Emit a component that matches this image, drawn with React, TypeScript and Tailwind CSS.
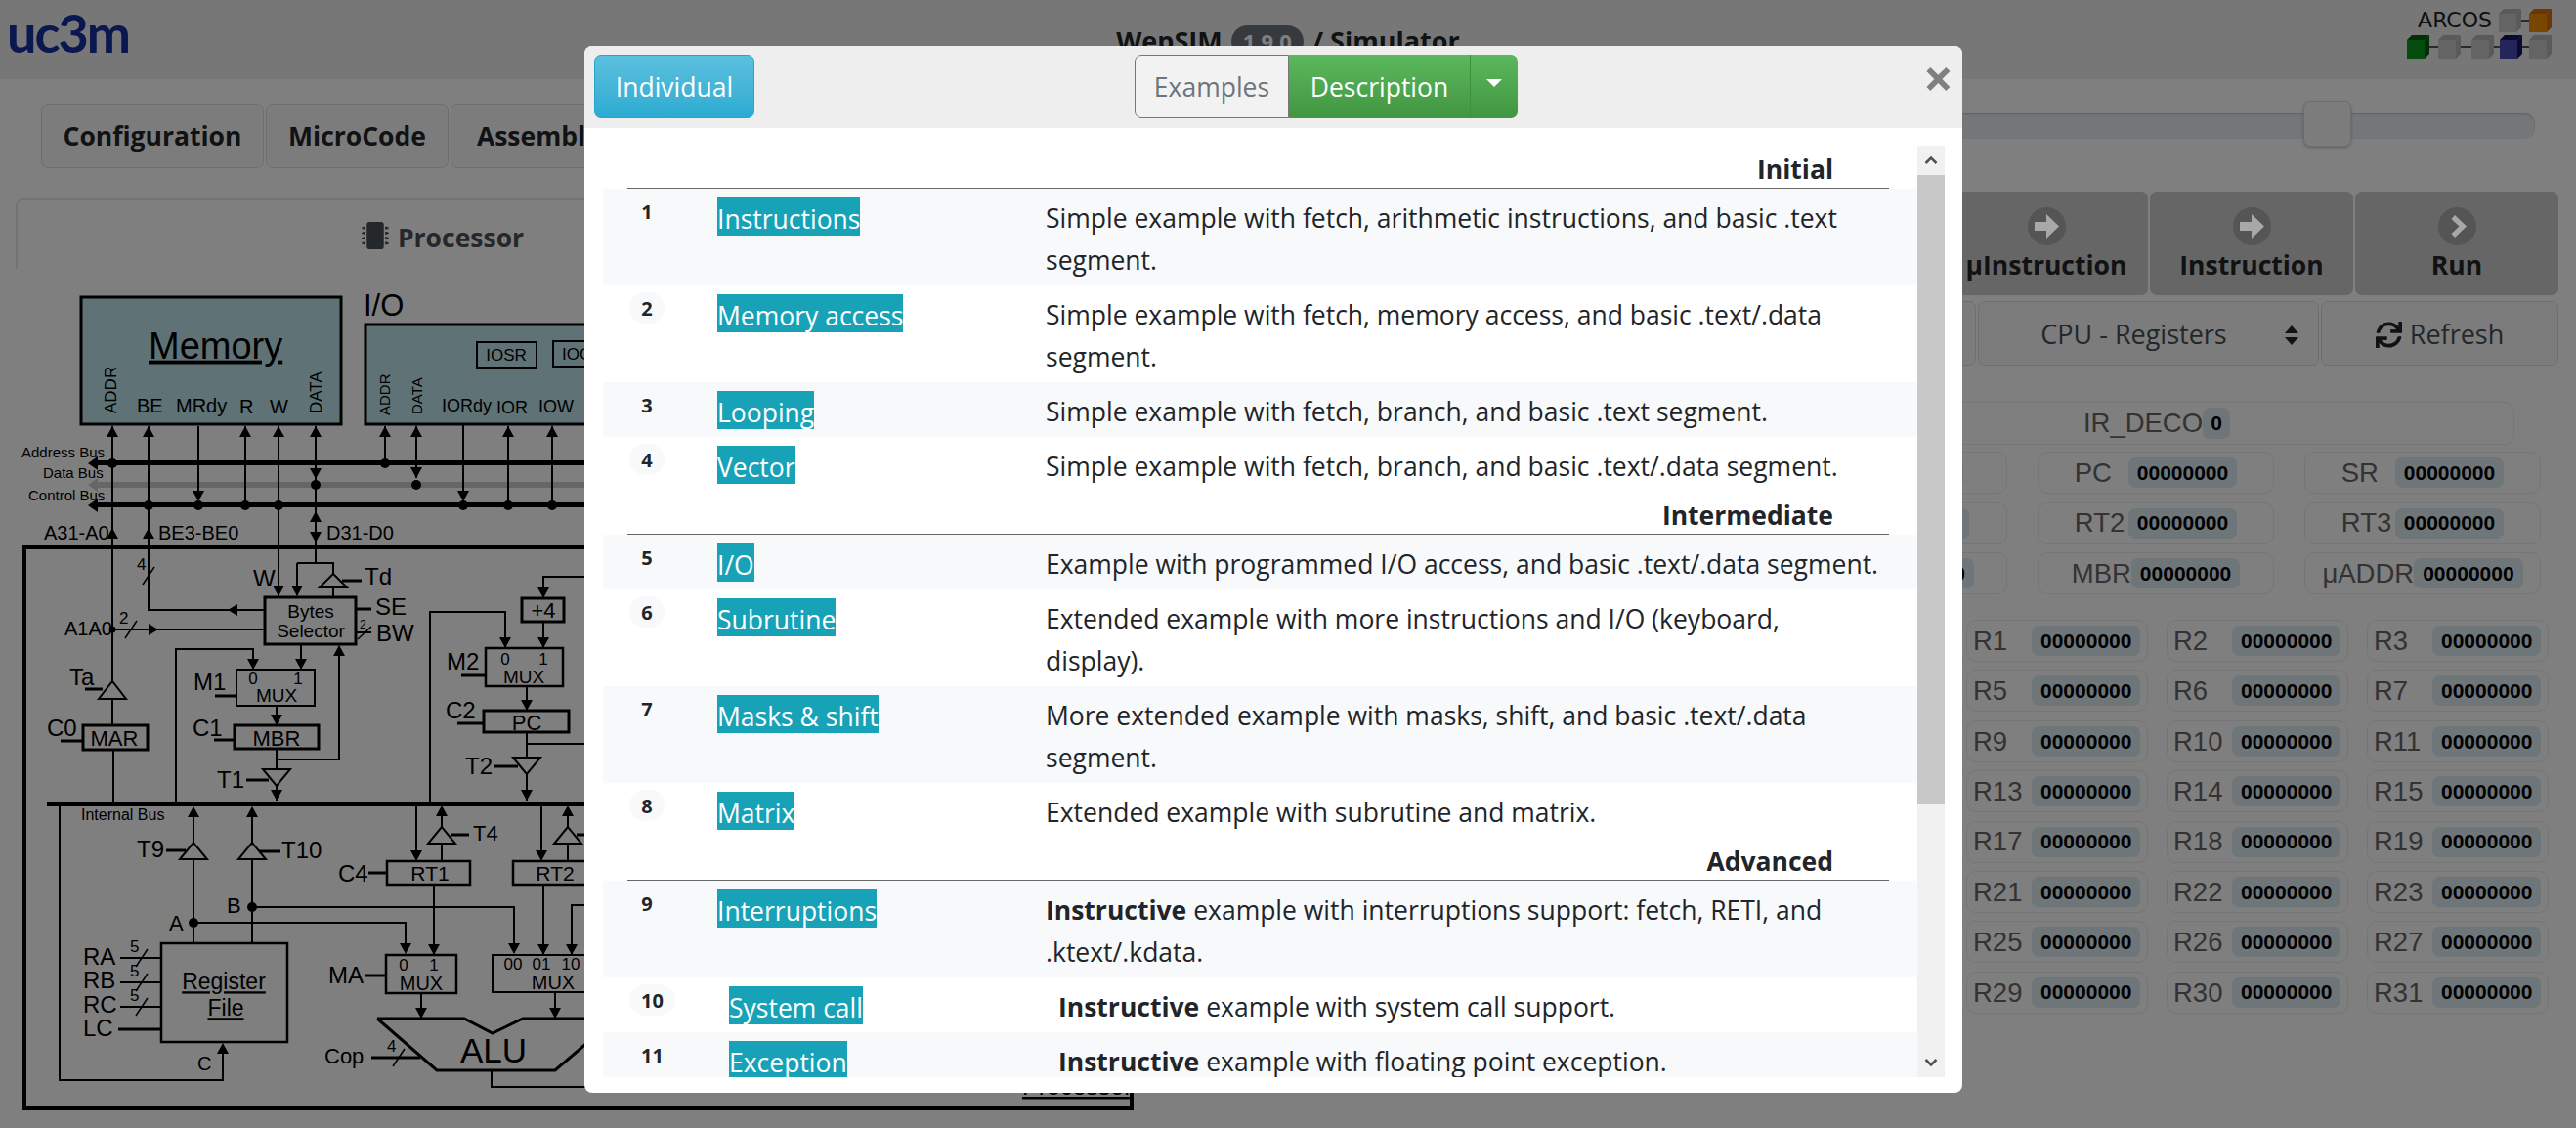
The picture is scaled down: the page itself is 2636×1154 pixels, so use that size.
import React from 'react';
import { FaMicrochip, FaSync } from 'react-icons/fa';

const Ln = ({ d, w = 2 }: { d: string; w?: number }) => <path d={d} fill="none" stroke="#000" strokeWidth={w} />;
const Up = ({ x, y, s = 6 }: { x: number; y: number; s?: number }) => <polygon points={`${x},${y} ${x - s},${y + 11} ${x + s},${y + 11}`} fill="#000" />;
const Down = ({ x, y, s = 6 }: { x: number; y: number; s?: number }) => <polygon points={`${x},${y} ${x - s},${y - 11} ${x + s},${y - 11}`} fill="#000" />;
const Dot = ({ x, y, r = 5 }: { x: number; y: number; r?: number }) => <circle cx={x} cy={y} r={r} fill="#000" />;
const T = ({ x, y, s = 20, a = 'start', u, c }: { x: number; y: number; s?: number; a?: 'start' | 'middle' | 'end'; u?: boolean; c: string }) => (
  <text x={x} y={y + s * 0.36} fontSize={s} textAnchor={a} fill="#000" textDecoration={u ? 'underline' : undefined}>{c}</text>
);
const V = ({ x, y, s, c }: { x: number; y: number; s: number; c: string }) => (
  <text transform={`translate(${x},${y}) rotate(-90)`} fontSize={s} fill="#000">{c}</text>
);
const BufUp = ({ x, top, base, h = 14 }: { x: number; top: number; base: number; h?: number }) => <polygon points={`${x},${top} ${x - h},${base} ${x + h},${base}`} fill="none" stroke="#000" strokeWidth={2} />;
const BufDown = ({ x, top, base, h = 14 }: { x: number; top: number; base: number; h?: number }) => <polygon points={`${x},${base} ${x - h},${top} ${x + h},${top}`} fill="none" stroke="#000" strokeWidth={2} />;
const Box = ({ x, y, w, h, sw = 2 }: { x: number; y: number; w: number; h: number; sw?: number }) => <rect x={x} y={y} width={w} height={h} fill="none" stroke="#000" strokeWidth={sw} />;
const Slash = ({ x, y, n }: { x: number; y: number; n: string }) => (
  <g>
    <path d={`M${x - 6},${y + 9} L${x + 6},${y - 9}`} stroke="#000" strokeWidth={1.5} />
    <T x={x - 12} y={y - 12} s={17} c={n} />
  </g>
);

function Diagram() {
  return (
    <svg className="block" width="1180" height="878" viewBox="0 276 1180 878" style={{ fontFamily: '"Liberation Sans", Arial, sans-serif' }}>
      <T x={372} y={313} s={31} c="I/O" />
      <rect x={83} y={305} width={266} height={130} fill="#bfe5ed" stroke="#000" strokeWidth={3} />
      <rect x={374} y={333} width={400} height={102} fill="#bfe5ed" stroke="#000" strokeWidth={3} />
      <T x={152} y={354} s={38} u c="Memory" />
      <Box x={488} y={351} w={61} h={26} />
      <T x={518} y={364} s={17} a="middle" c="IOSR" />
      <Box x={566} y={350} w={61} h={26} />
      <T x={575} y={363} s={17} c="IOCR" />
      <V x={119} y={424} s={17} c="ADDR" />
      <V x={329} y={424} s={17} c="DATA" />
      <V x={399} y={426} s={15} c="ADDR" />
      <V x={432} y={425} s={15} c="DATA" />
      <T x={140} y={416} s={20} c="BE" />
      <T x={180} y={416} s={20} c="MRdy" />
      <T x={245} y={417} s={20} c="R" />
      <T x={276} y={417} s={20} c="W" />
      <T x={452} y={416} s={18} c="IORdy" />
      <T x={508} y={418} s={18} c="IOR" />
      <T x={551} y={417} s={18} c="IOW" />

      <T x={22} y={464} s={15} c="Address Bus" />
      <T x={44} y={485} s={15} c="Data Bus" />
      <T x={29} y={508} s={15} c="Control Bus" />
      <rect x={98} y={472} width={560} height={5} />
      <polygon points="90,475 100,468 100,482" />
      <rect x={98} y={494} width={560} height={6} fill="#ccc" />
      <polygon points="90,497 100,490 100,504" fill="#ccc" />
      <rect x={98} y={515} width={560} height={5} />
      <polygon points="90,518 100,511 100,525" />

      <Ln d="M115,437 V700" />
      <Ln d="M152,437 V625 H271" />
      <Ln d="M203,437 V510" />
      <Ln d="M251,437 V518" />
      <Ln d="M285,437 V612" />
      <Ln d="M323,437 V577" />
      <Ln d="M394,437 V475" />
      <Ln d="M426,437 V490" />
      <Ln d="M474,435 V510" />
      <Ln d="M520,437 V518" />
      <Ln d="M565,437 V518" />
      {[115, 152, 251, 285, 323, 394, 426, 520, 565].map(x => <Up key={x} x={x} y={437} />)}
      <Down x={323} y={491} />
      <Down x={426} y={490} />
      <Down x={203} y={514} />
      <Down x={474} y={514} />
      <Dot x={115} y={475} />
      <Dot x={394} y={475} />
      <Dot x={323} y={497} />
      <Dot x={426} y={497} />
      {[152, 203, 251, 285, 474, 520, 565].map(x => <Dot key={x} x={x} y={518} />)}

      <T x={45} y={546} s={20} c="A31-A0" />
      <Up x={115} y={541} />
      <Up x={152} y={541} />
      <T x={162} y={546} s={20} c="BE3-BE0" />
      <Up x={323} y={524} />
      <Down x={323} y={556} />
      <T x={334} y={546} s={20} c="D31-D0" />

      <rect x={25} y={561} width={1133} height={574} fill="none" stroke="#000" strokeWidth={4} />

      <Slash x={152} y={590} n="4" />
      <Ln d="M304,577 H341 V588" />
      <Ln d="M304,577 V610" />
      <Ln d="M341,602 V612" />
      <Down x={304} y={611} />
      <BufUp x={341} top={588} base={602} />
      <Ln d="M350,595 H370" w={3} />
      <T x={373} y={590} s={24} c="Td" />
      <T x={259} y={592} s={24} c="W" />
      <Down x={285} y={611} />
      <polygon points="233,625 243,619 243,631" />
      <Box x={271} y={612} w={93} h={48} sw={3} />
      <T x={318} y={626} s={19} a="middle" c="Bytes" />
      <T x={318} y={646} s={19} a="middle" c="Selector" />
      <Ln d="M364,624 H380" w={3} />
      <T x={384} y={621} s={24} c="SE" />
      <Ln d="M364,648 H380" />
      <path d="M366,655 L380,642" stroke="#000" strokeWidth={1.5} />
      <T x={368} y={640} s={12} c="2" />
      <T x={385} y={648} s={24} c="BW" />

      <T x={66} y={644} s={20} c="A1A0" />
      <Dot x={115} y={645} r={3.5} />
      <Ln d="M115,645 H271" />
      <Slash x={134} y={645} n="2" />
      <polygon points="162,645 152,639 152,651" />

      <T x={71} y={693} s={24} c="Ta" />
      <BufUp x={115} top={698} base={716} />
      <Ln d="M87,706 H105" w={3} />
      <Ln d="M115,716 V743" />
      <Box x={85} y={743} w={66} h={25} sw={3} />
      <T x={117} y={756} s={22} a="middle" c="MAR" />
      <T x={48} y={745} s={24} c="C0" />
      <Ln d="M62,759 H84" w={3} />
      <Ln d="M116,768 V823" />

      <Ln d="M180,823 V665 H259 V686" />
      <Down x={259} y={686} />
      <Ln d="M308,660 V686" />
      <Down x={308} y={686} />
      <Box x={242} y={686} w={80} h={37} />
      <T x={259} y={695} s={17} a="middle" c="0" />
      <T x={305} y={695} s={17} a="middle" c="1" />
      <T x={283} y={712} s={19} a="middle" c="MUX" />
      <T x={198} y={698} s={24} c="M1" />
      <Ln d="M220,713 H242" w={3} />
      <Ln d="M283,723 V743" />
      <Down x={283} y={743} />
      <Box x={240} y={743} w={86} h={24} sw={3} />
      <T x={283} y={756} s={22} a="middle" c="MBR" />
      <T x={197} y={745} s={24} c="C1" />
      <Ln d="M219,758 H240" w={3} />
      <Ln d="M283,767 V788" />
      <Ln d="M283,778 H347 V662" />
      <Up x={347} y={661} />
      <BufDown x={283} top={788} base={805} />
      <T x={222} y={798} s={24} c="T1" />
      <Ln d="M252,799 H275" w={3} />
      <Ln d="M283,805 V820" />
      <Down x={283} y={820} />

      <Ln d="M658,591 H556 V613" />
      <Down x={556} y={613} />
      <Box x={534} y={613} w={43} h={24} sw={3} />
      <T x={556} y={625} s={22} a="middle" c="+4" />
      <Ln d="M556,637 V664" />
      <Down x={556} y={664} />
      <Ln d="M440,823 V627 H517 V664" />
      <Down x={517} y={664} />
      <Box x={497} y={664} w={79} h={39} sw={2.5} />
      <T x={517} y={675} s={17} a="middle" c="0" />
      <T x={556} y={675} s={17} a="middle" c="1" />
      <T x={536} y={693} s={19} a="middle" c="MUX" />
      <T x={457} y={677} s={24} c="M2" />
      <Ln d="M472,692 H497" w={3} />
      <Ln d="M539,703 V728" />
      <Down x={539} y={728} />
      <Box x={495} y={728} w={87} h={22} sw={3} />
      <T x={539} y={740} s={22} a="middle" c="PC" />
      <T x={456} y={727} s={24} c="C2" />
      <Ln d="M468,741 H495" w={3} />
      <Ln d="M539,750 V776" />
      <Ln d="M539,762 H658" />
      <BufDown x={539} top={776} base={793} />
      <T x={476} y={784} s={24} c="T2" />
      <Ln d="M506,785 H530" w={3} />
      <Ln d="M539,793 V820" />
      <Down x={539} y={820} />

      <rect x={48} y={821} width={800} height={5} />
      <T x={83} y={834} s={16} c="Internal Bus" />
      <Ln d="M61,823 V1106 H228 V1070" />
      <Up x={228} y={1068} />
      <T x={202} y={1089} s={20} c="C" />

      <Up x={198} y={826} />
      <Ln d="M198,835 V863" />
      <BufUp x={198} top={863} base={880} />
      <Ln d="M198,880 V966" />
      <T x={140} y={869} s={24} c="T9" />
      <Ln d="M170,871 H190" w={3} />
      <Up x={258} y={826} />
      <Ln d="M258,835 V863" />
      <BufUp x={258} top={863} base={880} />
      <Ln d="M258,880 V966" />
      <T x={288} y={870} s={24} c="T10" />
      <Ln d="M265,872 H287" w={3} />
      <Dot x={198} y={945} />
      <T x={173} y={945} s={22} c="A" />
      <Ln d="M198,945 H415 V975" />
      <Down x={415} y={977} />
      <Dot x={258} y={929} />
      <T x={232} y={927} s={22} c="B" />
      <Ln d="M258,929 H526 V975" />
      <Down x={526} y={977} />

      <Box x={165} y={966} w={129} h={101} sw={2.5} />
      <T x={229} y={1005} s={23} a="middle" u c="Register" />
      <T x={231} y={1032} s={23} a="middle" u c="File" />
      <T x={85} y={979} s={24} c="RA" />
      <Ln d="M123,981 H165" />
      <Slash x={145} y={981} n="5" />
      <T x={85} y={1003} s={24} c="RB" />
      <Ln d="M123,1006 H165" />
      <Slash x={145} y={1006} n="5" />
      <T x={85} y={1028} s={24} c="RC" />
      <Ln d="M123,1031 H165" />
      <Slash x={145} y={1031} n="5" />
      <T x={85} y={1052} s={24} c="LC" />
      <Ln d="M121,1054 H165" w={3} />

      <Ln d="M426,823 V880" />
      <Down x={426} y={882} />
      <Up x={452} y={825} />
      <Ln d="M452,835 V847" />
      <BufUp x={452} top={847} base={864} />
      <Ln d="M452,864 V882" />
      <T x={484} y={853} s={22} c="T4" />
      <Ln d="M462,855 H480" w={3} />
      <Box x={396} y={882} w={85} h={24} sw={2.5} />
      <T x={440} y={894} s={21} a="middle" c="RT1" />
      <T x={346} y={894} s={24} c="C4" />
      <Ln d="M377,894 H396" w={3} />
      <Ln d="M444,906 V977" />
      <Down x={444} y={978} />
      <Box x={395} y={978} w={72} h={39} sw={2.5} />
      <T x={413} y={988} s={17} a="middle" c="0" />
      <T x={444} y={988} s={17} a="middle" c="1" />
      <T x={431} y={1007} s={20} a="middle" c="MUX" />
      <T x={336} y={998} s={24} c="MA" />
      <Ln d="M374,999 H395" w={3} />
      <Ln d="M431,1017 V1042" />
      <Down x={431} y={1043} />

      <Ln d="M554,823 V880" />
      <Down x={554} y={882} />
      <Up x={581} y={825} />
      <Ln d="M581,835 V847" />
      <BufUp x={581} top={847} base={864} />
      <Ln d="M581,864 V882" />
      <Ln d="M590,855 H610" w={3} />
      <Box x={525} y={882} w={140} h={24} sw={2.5} />
      <T x={568} y={894} s={21} a="middle" c="RT2" />
      <Ln d="M556,906 V977" />
      <Down x={556} y={978} />
      <Ln d="M658,927 H585 V977" />
      <Down x={585} y={978} />
      <Box x={504} y={978} w={150} h={38} />
      <T x={525} y={987} s={17} a="middle" c="00" />
      <T x={554} y={987} s={17} a="middle" c="01" />
      <T x={584} y={987} s={17} a="middle" c="10" />
      <T x={566} y={1006} s={20} a="middle" c="MUX" />
      <Ln d="M568,1016 V1042" />
      <Down x={568} y={1043} />

      <path d="M386,1043 H475 L504,1058 L535,1043 H660 M386,1043 L447,1096 H568 L630,1043" fill="none" stroke="#000" strokeWidth={3} />
      <T x={505} y={1075} s={35} a="middle" c="ALU" />
      <T x={332} y={1081} s={22} c="Cop" />
      <Ln d="M380,1083 H430" w={3} />
      <Slash x={408} y={1083} n="4" />
      <Ln d="M503,1096 V1113 H660" />

      <T x={1046} y={1112} s={25} u c="Processor" />
    </svg>
  );
}

// sits above the dim layer, so the colours here are the dimmed ones
function CircleArrow({ chevron }: { chevron?: boolean }) {
  return (
    <svg width="39" height="39" viewBox="0 0 39 39" className="relative z-10 block">
      <circle cx="19.5" cy="19.5" r="19.5" fill="#555555" />
      {chevron
        ? <path d="M14,8 L26,19.5 L14,31 L10.5,27 L18.5,19.5 L10.5,12 Z" transform="translate(3 0)" fill="#a8a8a8" />
        : <path d="M7,15 H19 V7 L32,19.5 L19,32 V24 H7 Z" fill="#a8a8a8" />}
    </svg>
  );
}

function Cube({ color, dark }: { color: string; dark: string }) {
  return (
    <svg width="23" height="24" viewBox="0 0 23 24" className="block">
      <polygon points="0,5 5,0 23,0 18,5" fill={dark} />
      <polygon points="18,5 23,0 23,19 18,24" fill={dark} />
      <rect x="0" y="5" width="18" height="19" fill={color} />
    </svg>
  );
}

const GRAY = { color: '#c8c8c8', dark: '#b4b4b4' };

function ArcosLogo() {
  return (
    <div className="flex flex-col items-end gap-[3px]">
      <div className="flex items-center text-[22px] leading-none text-[#222]" style={{ fontFamily: '"DejaVu Sans", sans-serif' }}>
        <span className="mr-[7px]">ARCOS</span>
        <Cube {...GRAY} />
        <span className="w-[8px] h-[2px] bg-[#555]" />
        <Cube color="#f08c00" dark="#d86a10" />
      </div>
      <div className="flex items-center">
        <Cube color="#0a9a1e" dark="#045c10" />
        <span className="w-[9px] h-[2px] bg-[#555]" />
        <Cube {...GRAY} />
        <span className="w-[11px] h-[2px] bg-[#555]" />
        <Cube {...GRAY} />
        <span className="w-[6px] h-[2px] bg-[#555]" />
        <Cube color="#4a4ab8" dark="#14145c" />
        <span className="w-[7px] h-[2px] bg-[#555]" />
        <Cube {...GRAY} />
      </div>
    </div>
  );
}

const Badge = ({ v }: { v: string }) => (
  <span className="inline-flex h-[31px] items-center justify-center rounded-[7px] bg-[#dcecf4] px-[9px] text-[21px] font-bold text-black">{v}</span>
);

function RegCell({ label, pad }: { label: string; pad?: string }) {
  return (
    <div className={`flex h-[43px] items-center rounded-[10px] border border-[#ececec] ${pad ?? 'justify-center'}`}>
      <span className="min-w-[55px] text-[27.5px] text-[#666]">{label}</span>
      <Badge v="00000000" />
    </div>
  );
}

function Registers() {
  const regs = Array.from({ length: 32 }, (_, i) => `R${i}`);
  return (
    <div className="mt-[26px] grid w-[801px] grid-cols-4 gap-x-[19px] gap-y-[8.4px]">
      {regs.map(r => (
        <div key={r} className="flex h-[43px] w-[186px] items-center rounded-[10px] border border-[#ececec] pl-[6px]">
          <span className="w-[60px] text-[27.5px] text-[#666]">{r}</span>
          <Badge v="00000000" />
        </div>
      ))}
    </div>
  );
}

type Ex = { n: number; name: string; desc: React.ReactNode; indent?: boolean };

const b = <b className="font-bold">Instructive</b>;

const sections: { title: string; rows: Ex[] }[] = [
  {
    title: 'Initial',
    rows: [
      { n: 1, name: 'Instructions', desc: <>Simple example with fetch, arithmetic instructions, and basic .text<br />segment.</> },
      { n: 2, name: 'Memory access', desc: <>Simple example with fetch, memory access, and basic .text/.data<br />segment.</> },
      { n: 3, name: 'Looping', desc: 'Simple example with fetch, branch, and basic .text segment.' },
      { n: 4, name: 'Vector', desc: 'Simple example with fetch, branch, and basic .text/.data segment.' },
    ],
  },
  {
    title: 'Intermediate',
    rows: [
      { n: 5, name: 'I/O', desc: 'Example with programmed I/O access, and basic .text/.data segment.' },
      { n: 6, name: 'Subrutine', desc: <>Extended example with more instructions and I/O (keyboard,<br />display).</> },
      { n: 7, name: 'Masks & shift', desc: <>More extended example with masks, shift, and basic .text/.data<br />segment.</> },
      { n: 8, name: 'Matrix', desc: 'Extended example with subrutine and matrix.' },
    ],
  },
  {
    title: 'Advanced',
    rows: [
      { n: 9, name: 'Interruptions', desc: <>{b} example with interruptions support: fetch, RETI, and<br />.ktext/.kdata.</> },
      { n: 10, name: 'System call', desc: <>{b} example with system call support.</>, indent: true },
      { n: 11, name: 'Exception', desc: <>{b} example with floating point exception.</>, indent: true },
    ],
  },
];

function ExampleRow({ row, odd }: { row: Ex; odd: boolean }) {
  return (
    <div className={`flex pb-[4px] ${odd ? 'bg-[#f8f9fa]' : 'bg-white'}`}>
      <div className="w-[117px] shrink-0 pl-[27px] pt-[7px]">
        <span className="inline-block h-[32px] min-w-[36px] rounded-full bg-[#f8f9fa] px-[12px] text-center text-[20px] font-bold leading-[34px] text-[#212529]">{row.n}</span>
      </div>
      <div className={`w-[336px] shrink-0 pt-[9px] ${row.indent ? 'pl-[12px]' : ''}`}>
        <span className="block h-[39px] w-fit bg-[#17a2b8] text-[26.5px] font-medium leading-[45px] text-white">{row.name}</span>
      </div>
      <div className={`pt-[9px] text-[26.5px] leading-[43px] text-[#212529] ${row.indent ? 'pl-[13px]' : ''}`}>{row.desc}</div>
    </div>
  );
}

function ExamplesModal() {
  return (
    <div className="absolute left-[598px] top-[47px] h-[1071px] w-[1410px] overflow-hidden rounded-[8px] bg-white">
      <div className="flex h-[84px] items-start bg-[#eeeeee] pl-[10px] pr-[9px] pt-[9px]">
        <div className="flex h-[65px] w-[164px] items-center justify-center rounded-[7px] border border-[#28a4c9] bg-gradient-to-b from-[#5bc0de] to-[#2aabd2] pt-[2px] text-[26.5px] text-white">Individual</div>
        <div className="ml-[389px] flex h-[65px]">
          <div className="flex w-[158px] items-center justify-center rounded-l-[7px] border border-[#777] bg-[#f2f2f2] pt-[2px] text-[26.5px] text-[#6c757d]">Examples</div>
          <div className="flex w-[185px] items-center justify-center bg-gradient-to-b from-[#5cb85c] to-[#419641] pt-[2px] text-[26.5px] text-white">Description</div>
          <div className="flex w-[49px] items-start justify-center rounded-r-[7px] border-l border-[#3e8f3e] bg-gradient-to-b from-[#5cb85c] to-[#419641] pt-[25px]">
            <span className="h-0 w-0 border-x-[8px] border-t-[8px] border-x-transparent border-t-white" />
          </div>
        </div>
        <div className="ml-auto mt-[-4px] text-[54px] font-bold leading-[54px] text-[#808080]">×</div>
      </div>
      <div className="flex pl-[19px] pt-[18px]">
        <div className="h-[953px] w-[1345px] overflow-hidden">
          {sections.map(s => (
            <div key={s.title}>
              <div className="ml-[25px] mr-[29px] flex h-[44px] items-center justify-end border-b border-[#666] pr-[57px] pt-[6px] text-[26.5px] font-bold text-[#212529]">{s.title}</div>
              {s.rows.map((r, i) => <ExampleRow key={r.n} row={r} odd={i % 2 === 0} />)}
            </div>
          ))}
        </div>
        <div className="flex h-[953px] w-[28px] flex-col bg-[#f1f1f1]">
          <div className="flex h-[30px] items-center justify-center">
            <svg width="14" height="10" viewBox="0 0 14 10"><path d="M1.5,8 L7,2.5 L12.5,8" fill="none" stroke="#505050" strokeWidth="2.5" /></svg>
          </div>
          <div className="h-[644px] bg-[#c8c8c8]" />
          <div className="mt-auto flex h-[30px] items-center justify-center">
            <svg width="14" height="10" viewBox="0 0 14 10"><path d="M1.5,2 L7,7.5 L12.5,2" fill="none" stroke="#505050" strokeWidth="2.5" /></svg>
          </div>
        </div>
      </div>
    </div>
  );
}

export default function App() {
  return (
    <div className="relative h-[1154px] w-[2636px] overflow-hidden bg-white text-[#212529]" style={{ fontFamily: '"Open Sans", "Noto Sans", sans-serif' }}>
      <header className="grid h-[81px] grid-cols-3 items-start bg-[#eeeeee]">
        <div className="pl-[7px] pt-[6px] text-[54px] font-bold leading-[56px] tracking-[-2px] text-[#14309f]" style={{ fontFamily: 'Lato, sans-serif' }}>uc3m</div>
        <div className="flex items-center justify-center pt-[22px] text-[27px] font-bold">
          WepSIM
          <span className="mx-[9px] rounded-full bg-[#6c757d] px-[12px] text-[22px] text-white">1.9.0</span>
          / Simulator
        </div>
        <div className="flex justify-end pr-[25px] pt-[9px]"><ArcosLogo /></div>
      </header>

      <div className="flex h-[115px] items-start pl-[42px] pt-[25px]">
        <div className="flex gap-[2px]">
          {[['Configuration', 'w-[228px]'], ['MicroCode', 'w-[187px]'], ['Assembly', 'w-[180px]']].map(([t, w]) => (
            <div key={t} className={`flex h-[66px] items-center justify-center rounded-[7px] border border-[#dddddd] bg-[#f8f9fa] pt-[2px] text-[26.5px] font-bold ${w}`}>{t}</div>
          ))}
        </div>
        <div className="relative ml-[1000px] mr-[42px] mt-[10px] h-[26px] flex-1 rounded-[10px] bg-[#e9ecef] shadow-[inset_0_1px_2px_rgba(0,0,0,0.2)]">
          <div className="absolute left-[716px] top-[-13px] h-[47px] w-[49px] rounded-[7px] border border-[#dddddd] bg-[#f8f9fa] shadow-[0_1px_3px_rgba(0,0,0,0.25)]" />
        </div>
      </div>

      <div className="flex">
        <div className="w-[1300px] shrink-0">
          <div className="ml-[16px] mt-[7px] flex h-[72px] w-[872px] items-start justify-center gap-[9px] rounded-t-[7px] border-l-2 border-t-2 border-[#e6e6e6] pt-[19px] text-[26.5px] font-bold text-[#495057]">
            <FaMicrochip className="mt-[3px] h-[28px] w-[28px]" />
            Processor
          </div>
          <Diagram />
        </div>

        <div className="flex w-[1336px] flex-col items-end pr-[18px]">
          <div className="flex gap-[2px]">
            {[['μInstruction', false], ['Instruction', false], ['Run', true]].map(([t, c]) => (
              <div key={String(t)} className="flex h-[106px] w-[208px] flex-col items-center rounded-[7px] bg-[#cccccc] pt-[16px]">
                <CircleArrow chevron={Boolean(c)} />
                <span className="mt-[1px] text-[26.5px] font-bold">{t}</span>
              </div>
            ))}
          </div>
          <div className="mt-[6px] flex h-[66px] gap-[2px] text-[27px] text-[#495057]">
            <div className="w-[100px] rounded-[7px] border border-[#dddddd] bg-[#f8f9fa]" />
            <div className="relative flex w-[349px] items-center justify-center rounded-[7px] border border-[#dddddd] bg-[#f8f9fa] pr-[30px] pt-[3px]">
              CPU - Registers
              <svg className="absolute right-[20px] top-[24px]" width="14" height="20" viewBox="0 0 14 20"><path d="M7,0 L14,8 H0 Z M7,20 L14,12 H0 Z" fill="#212529" /></svg>
            </div>
            <div className="flex w-[243px] items-center justify-center gap-[8px] rounded-[7px] border border-[#dddddd] bg-[#f8f9fa] pt-[3px]">
              <FaSync className="h-[27px] w-[27px] text-[#212529]" />
              Refresh
            </div>
          </div>

          <div className="w-[811px]" style={{ fontFamily: '"Liberation Sans", Arial, sans-serif' }}>
            <div className="ml-[34px] mt-[37px] flex h-[44px] w-[732px] items-center justify-center rounded-[10px] border border-[#ececec] text-[27.5px] text-[#666]">
              IR_DECO
              <span className="inline-flex h-[32px] w-[28px] items-center justify-center rounded-[7px] bg-[#dcecf4] text-[21px] font-bold text-black">0</span>
            </div>
            <div className="ml-[5px] mt-[7px] grid w-[788px] grid-cols-3 gap-x-[31px] gap-y-[8.5px]">
              <RegCell label="IR" pad="justify-end pr-[44px]" />
              <RegCell label="PC" />
              <RegCell label="SR" />
              <RegCell label="RT1" pad="justify-end pr-[38px]" />
              <RegCell label="RT2" />
              <RegCell label="RT3" />
              <RegCell label="MAR" pad="justify-end pr-[33px]" />
              <RegCell label="MBR" />
              <RegCell label="μADDR" />
            </div>
            <Registers />
          </div>
        </div>
      </div>

      <div className="absolute inset-0 bg-black/50" />
      <ExamplesModal />
    </div>
  );
}
